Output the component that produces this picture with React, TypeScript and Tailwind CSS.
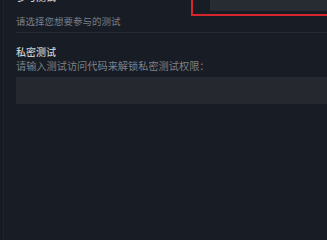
import React from "react";

export default function App() {
  return (
    <div
      className="w-[327px] h-[240px] overflow-hidden bg-[#181c24] flex"
      style={{ fontFamily: '"Noto Sans CJK SC", "Noto Sans", sans-serif' }}
    >
      <div className="w-[3px] shrink-0 bg-[#161a21]" />
      <div className="w-px shrink-0 bg-[#1f242c]" />
      <div className="flex-1 min-w-0 pl-[12px] flex flex-col">
        <div className="-mt-[10px] flex">
          <div className="w-[175px] shrink-0 flex flex-col">
            <div className="text-[10px] leading-[14px] font-medium text-[#c8cbd0] whitespace-nowrap">参与测试</div>
            <div className="mt-[10px] text-[9.5px] leading-[14px] text-[#7b818a] whitespace-nowrap">请选择您想要参与的测试</div>
          </div>
          <div className="w-[160px] shrink-0 h-[26px] border-2 border-[#d7262b] pl-[17px] pb-[3px]">
            <div className="h-full bg-[#272b32]" />
          </div>
        </div>
        <div className="mt-[4px] h-px bg-[#262b33] mr-[-20px]" />
        <div className="mt-[12px] text-[10px] leading-[14px] font-medium text-[#c8cbd0] whitespace-nowrap">私密测试</div>
        <div className="text-[10.2px] leading-[14px] text-[#7b818a] whitespace-nowrap">请输入测试访问代码来解锁私密测试权限：</div>
        <div className="mt-[4px] h-[27px] bg-[#25292f] mr-[-20px]" />
      </div>
    </div>
  );
}
